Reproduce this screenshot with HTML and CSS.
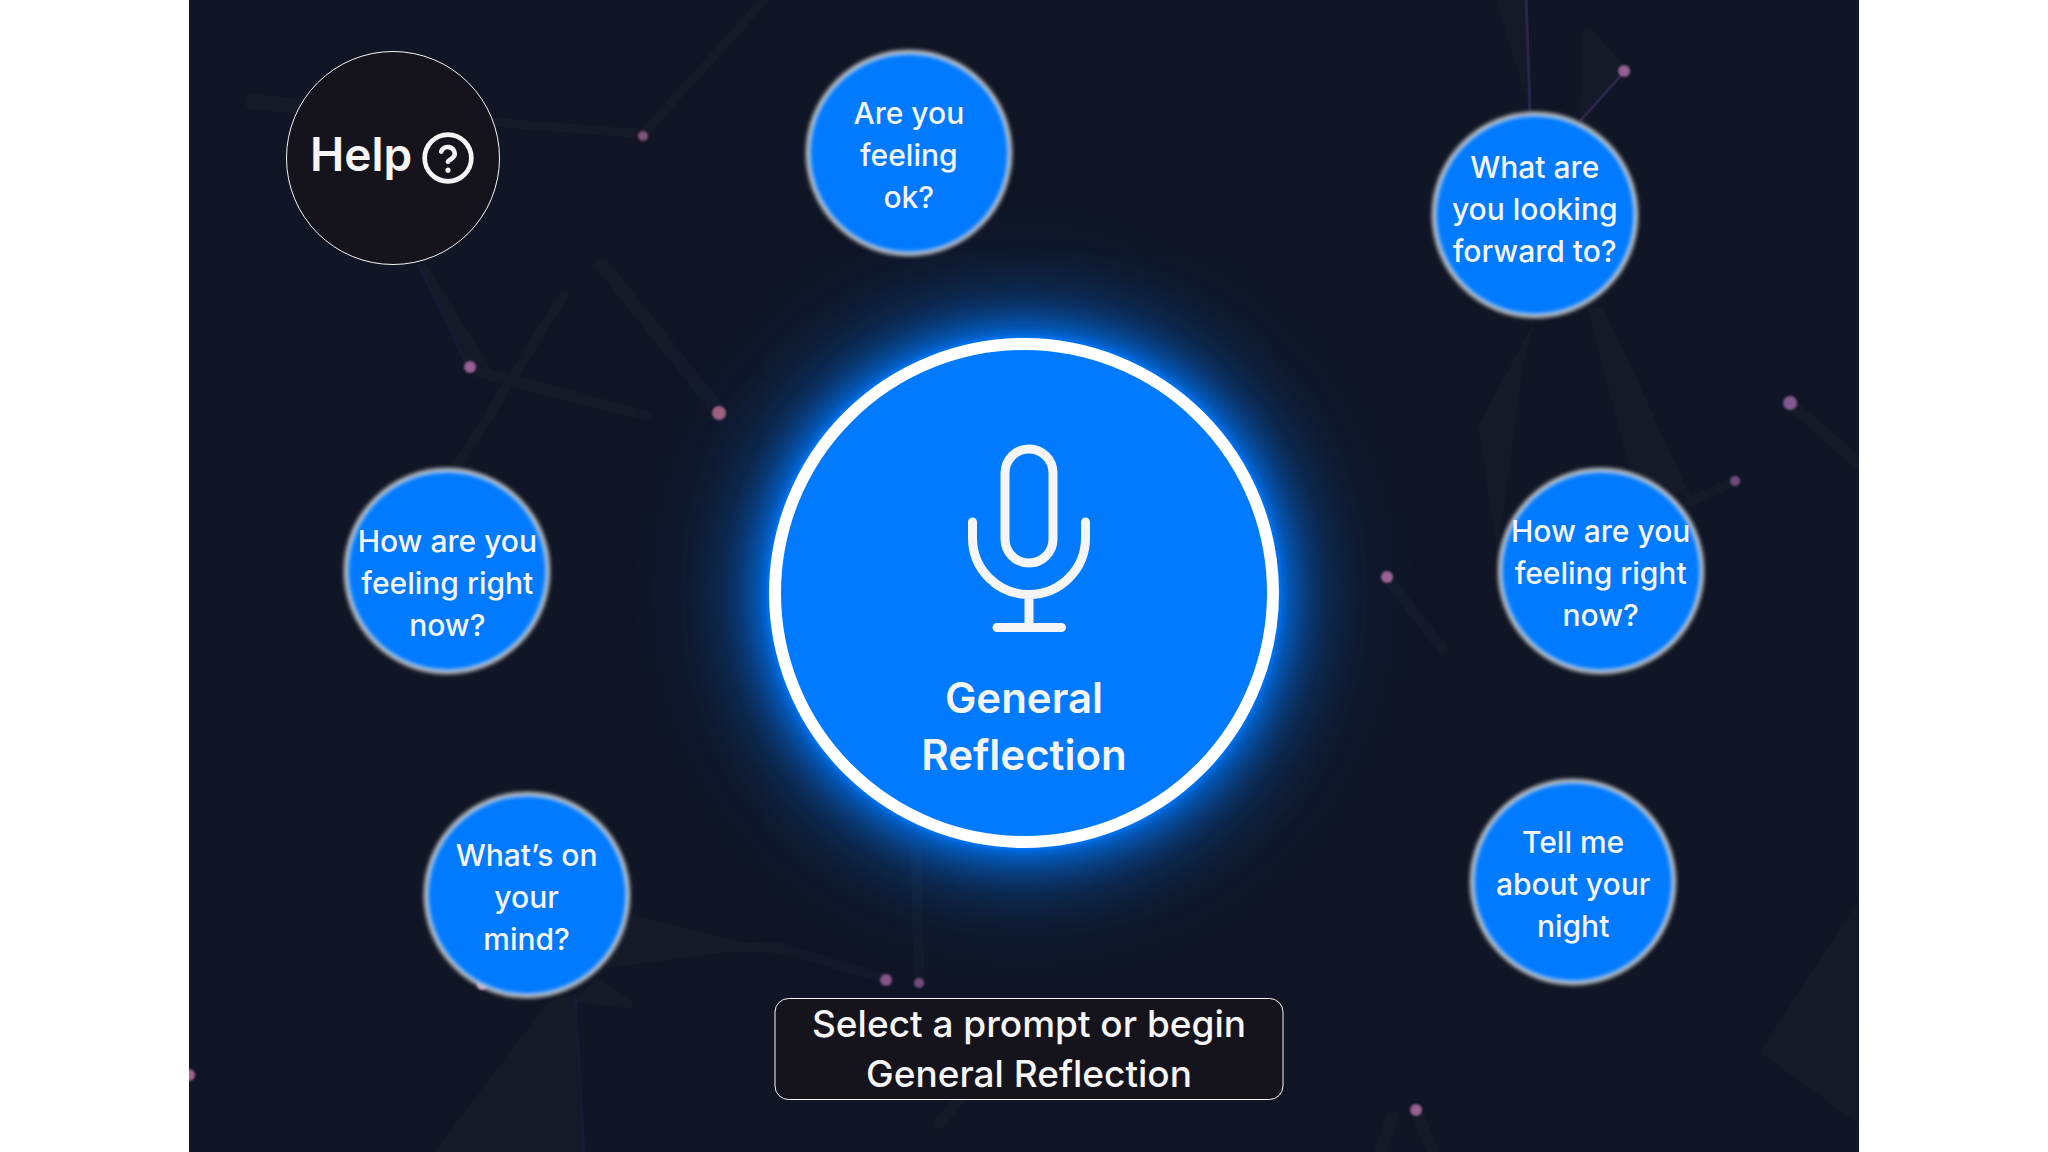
FILE: index.html
```html
<!DOCTYPE html>
<html lang="en">
<head>
<meta charset="utf-8">
<meta name="viewport" content="width=device-width, initial-scale=1">
<title>Reflection prompts</title>
<link rel="stylesheet" href="styles.css">
</head>
<body>
<main class="stage">
  <svg class="backdrop" viewBox="189 0 1669 1152" preserveAspectRatio="xMidYMid slice" aria-hidden="true">
    <!-- faint streaks and planes -->
    <g class="streaks">
      <path d="M253 102L470 122" stroke-width="16"/>
      <path d="M490 122L643 134" stroke-width="9"/>
      <path d="M645 132L768 -4" stroke-width="9"/>
      <path d="M602 265L718 410" stroke-width="14"/>
      <path d="M563 296L455 470" stroke-width="10"/>
      <path d="M478 372L648 416" stroke-width="11"/>
      <path d="M916 850L919 978" stroke-width="11"/>
      <path d="M775 946L882 978" stroke-width="10"/>
      <path d="M938 1124L966 1092" stroke-width="11"/>
      <path d="M1391 583L1442 648" stroke-width="11"/>
      <path d="M1793 406L1864 468" stroke-width="12"/>
      <path d="M1690 502L1733 482" stroke-width="10"/>
      <path d="M1392 1118L1378 1160" stroke-width="13"/>
      <path d="M1419 1118L1436 1160" stroke-width="12"/>
    </g>
    <g class="planes">
      <path d="M418 264L464 364L492 370L426 264Z"/>
      <path d="M1496 0H1525L1530 112Z"/>
      <path d="M1581 34Q1584 24 1592 30L1626 68L1580 122Z"/>
      <path d="M1535 320L1478 426L1497 550L1508 480L1522 370Z"/>
      <path d="M1587 308L1630 470L1692 500L1604 308Z"/>
      <path d="M632 915L746 943Q775 940 800 952L850 966Q760 944 700 956L606 968Z"/>
      <path d="M596 978L628 998Q640 1008 625 1008L574 1002Z"/>
      <path d="M548 1002L574 994L584 1152H434Z"/>
      <path d="M1858 900L1760 1052L1858 1124Z"/>
    </g>
    <g class="threads">
      <path class="thread-violet" d="M1526 0L1530 112"/>
      <path class="thread-violet" d="M1624 72L1580 121"/>
      <path d="M418 264L468 366"/>
      <path d="M575 994L584 1152"/>
    </g>
    <g class="stars">
      <circle cx="643" cy="136" r="5" fill="#80527e"/>
      <circle cx="470" cy="367" r="6" fill="#96608f"/>
      <circle cx="719" cy="413" r="7" fill="#a3627f"/>
      <circle cx="1624" cy="71" r="6" fill="#95608f"/>
      <circle cx="1790" cy="403" r="7" fill="#825890"/>
      <circle cx="1735" cy="481" r="5" fill="#714d7b"/>
      <circle cx="1387" cy="577" r="6" fill="#9d6394"/>
      <circle cx="886" cy="980" r="6" fill="#865488"/>
      <circle cx="919" cy="983" r="5" fill="#734e78"/>
      <circle cx="1416" cy="1110" r="6" fill="#96608f"/>
      <circle cx="189" cy="1075" r="6" fill="#a06390"/>
      <circle cx="482" cy="985" r="5" fill="#c58ab8"/>
    </g>
  </svg>

  <button type="button" class="node help">
    <span>Help</span>
    <svg class="help-icon" viewBox="0 0 24 24" aria-hidden="true">
      <circle cx="12" cy="12" r="10"/>
      <path d="M9.1 9.2a3 3 0 0 1 5.8 1c0 2-2.9 2.7-2.9 3.4"/>
      <circle class="help-dot" cx="12" cy="17.2" r="1.1"/>
    </svg>
  </button>

  <button type="button" class="node prompt feeling-ok"><span>Are you<br>feeling<br>ok?</span></button>
  <button type="button" class="node prompt prompt-high looking-forward"><span>What are<br>you looking<br>forward to?</span></button>
  <button type="button" class="node prompt prompt-low feeling-left"><span>How are you<br>feeling right<br>now?</span></button>
  <button type="button" class="node prompt feeling-right"><span>How are you<br>feeling right<br>now?</span></button>
  <button type="button" class="node prompt on-your-mind"><span>What’s on<br>your<br>mind?</span></button>
  <button type="button" class="node prompt your-night"><span>Tell me<br>about your<br>night</span></button>

  <button type="button" class="node general">
    <svg class="mic" viewBox="956 439 136 194" aria-hidden="true">
      <rect x="1005" y="449" width="48" height="114" rx="24"/>
      <path d="M972.500 522V538A56.500 56.500 0 0 0 1085.500 538V522M1029 595V627M997 627.500H1061.500"/>
    </svg>
    <span>General<br>Reflection</span>
  </button>

  <p class="node hint">Select a prompt or begin<br>General Reflection</p>
</main>
</body>
</html>
```
FILE: styles.css
```css
* {
  box-sizing: border-box;
}

body {
  margin: 0;
  background: #fff;
  font-family: Inter, "Open Sans", sans-serif;
  color: #f5f5f5;
}

.stage {
  position: relative;
  width: 81.5%;
  min-height: 100vh;
  margin: 0 auto;
  overflow: hidden;
  background: #101625;
}

.backdrop {
  position: absolute;
  inset: 0;
  width: 100%;
  height: 100%;
}

.streaks {
  fill: none;
  stroke: #141a28;
  stroke-linecap: round;
}

.planes {
  fill: #151a29;
}

.threads {
  fill: none;
  stroke: #171a33;
  stroke-width: 3;
}

.thread-violet {
  stroke: #2b2547;
}

.stars {
  filter: blur(1px);
}

/* Everything on the canvas is placed by its centre point */
.node {
  position: absolute;
  transform: translate(-50%, -50%);
  display: flex;
  align-items: center;
  justify-content: center;
  margin: 0;
  padding: 0;
  border: 0;
  font-family: inherit;
  color: inherit;
  text-align: center;
  white-space: nowrap;
}

button.node {
  border-radius: 50%;
  cursor: pointer;
}

.help {
  left: 12.2%;
  top: 13.75%;
  width: 214px;
  height: 214px;
  gap: 8px;
  border: 1px solid #f5f5f5;
  background: #15141d;
  font-size: 46px;
  font-weight: 600;
}

.help span {
  padding-bottom: 8px;
}

.help-icon {
  width: 56px;
  height: 56px;
  fill: none;
  stroke: currentColor;
  stroke-width: 2;
  stroke-linecap: round;
}

.help-icon .help-dot {
  fill: currentColor;
  stroke: none;
}

.prompt {
  width: 206px;
  height: 206px;
  padding-top: 4px;
  background: none;
  font-size: 30px;
  font-weight: 500;
  line-height: 42px;
}

.prompt::before {
  content: "";
  position: absolute;
  inset: 0;
  border: 4px solid #d9d9d9;
  border-radius: 50%;
  background: #007aff;
  filter: blur(2px);
}

.prompt span {
  position: relative;
}

.prompt-high {
  padding: 0 0 12px;
}

.prompt-low {
  padding-top: 24px;
}

.feeling-ok { left: 43.1%; top: 13.3%; }
.looking-forward { left: 80.6%; top: 18.7%; }
.feeling-left { left: 15.45%; top: 49.6%; }
.feeling-right { left: 84.55%; top: 49.6%; }
.on-your-mind { left: 20.2%; top: 77.7%; }
.your-night { left: 82.9%; top: 76.6%; }

.general {
  left: 50%;
  top: 51.5%;
  width: 510px;
  height: 510px;
  padding-top: 36px;
  flex-direction: column;
  gap: 36px;
  border: 12px solid #fff;
  background: #007aff;
  box-shadow:
    0 0 4px #007aff,
    0 0 12px #007aff,
    0 0 42px #007aff,
    0 0 84px #007aff,
    0 0 140px rgb(0 122 255 / 50%);
  font-size: 42px;
  font-weight: 600;
  line-height: 57px;
}

.mic {
  width: 136px;
  height: 194px;
  fill: none;
  stroke: currentColor;
  stroke-width: 9;
  stroke-linecap: round;
}

.hint {
  left: 50.3%;
  top: 91.05%;
  width: 509px;
  border: 1px solid #f5f5f5;
  border-radius: 14px;
  background: #15141d;
  font-size: 37px;
  font-weight: 500;
  line-height: 50px;
}
```
